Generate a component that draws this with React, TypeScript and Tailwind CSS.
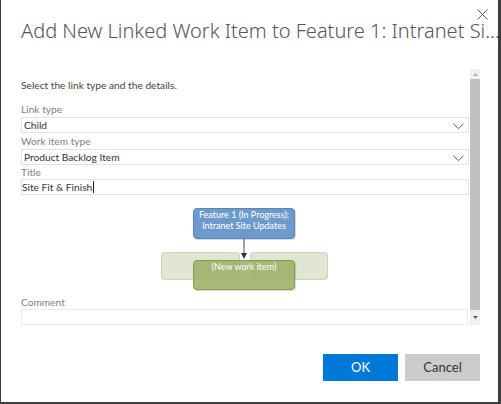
import React from "react";

const Chevron = () => (
  <svg width="11" height="7" viewBox="0 0 11 7" className="absolute right-[4px] top-[5px]">
    <path d="M0.5 0.8 L5.5 5.6 L10.5 0.8" fill="none" stroke="#555" strokeWidth="1" />
  </svg>
);

export default function App() {
  return (
    <div
      className="w-[501px] h-[404px] bg-white border-l border-r-[3px] border-b-[2px] border-[#3c3c3c] relative text-[#333] overflow-hidden"
      style={{ fontFamily: 'Lato, "Open Sans", sans-serif' }}
    >
      {/* close */}
      <svg width="11" height="11" viewBox="0 0 11 11" className="absolute left-[476px] top-[9px]">
        <path d="M0.5 0.5 L10.5 10.5 M10.5 0.5 L0.5 10.5" stroke="#555" strokeWidth="1" />
      </svg>

      {/* header */}
      <div className="pt-[17px] pl-[20px] h-[45px]">
        <div
          className="text-[20px] leading-[28px] font-light text-[#555] whitespace-nowrap"
          style={{ fontFamily: '"Noto Sans", "Open Sans", sans-serif' }}
        >
          Add New Linked Work Item to Feature 1: Intranet Si...
        </div>
      </div>

      {/* scroll region */}
      <div className="mt-[24px] pl-[20px] flex h-[256px]">
        <div className="w-[448px] flex flex-col text-[10.2px]">
          <div className="h-[32px] pt-[8px] leading-[16px] text-[#444]">
            Select the link type and the details.
          </div>
          <div className="h-[16px] leading-[16px] text-[#808080]">Link type</div>
          <div className="relative h-[16px] border border-[#e3e3e3] pl-[2px] leading-[14px] text-[#333]">
            Child
            <Chevron />
          </div>
          <div className="h-[16px] leading-[16px] text-[#808080]">Work item type</div>
          <div className="relative h-[16px] border border-[#e3e3e3] pl-[2px] leading-[14px] text-[#333]">
            Product Backlog Item
            <Chevron />
          </div>
          <div className="h-[14px] leading-[14px] text-[#808080]">Title</div>
          <div className="relative h-[16px] border border-[#e3e3e3] pl-[0px] leading-[14px] text-[#333] flex items-center">
            <span>Site Fit &amp; Finish</span>
            <span className="inline-block w-px h-[12px] bg-[#222] ml-[1px]" />
          </div>

          {/* diagram */}
          <div className="relative h-[101px]">
            <div className="absolute left-[140px] top-[57px] w-[79px] h-[28px] rounded-[3px] bg-[#e1e6d2] border border-[#cdd3ba]" />
            <div className="absolute left-[229px] top-[57px] w-[78px] h-[28px] rounded-[3px] bg-[#e1e6d2] border border-[#cdd3ba]" />
            <div className="absolute left-[172px] top-[13px] w-[102px] h-[31px] rounded-[4px] bg-[#6e9acb] border border-[#5a86b6] text-white text-[9px] leading-[11px] text-center pt-[0px] shadow-[1px_1px_1px_rgba(0,0,0,0.15)] whitespace-nowrap">
              Feature 1 (In Progress):
              <br />
              Intranet Site Updates
            </div>
            <div className="absolute left-[172px] top-[65px] w-[102px] h-[30px] rounded-[4px] bg-[#9fb169]/90 border border-[#879850] text-white text-[9px] leading-[11px] text-center pt-[0px] shadow-[1px_1px_1px_rgba(0,0,0,0.15)]">
              (New work item)
            </div>
            <svg width="10" height="22" viewBox="0 0 10 22" className="absolute left-[218px] top-[44px]">
              <path d="M5 0 L5 16" stroke="#444" strokeWidth="1" />
              <path d="M2 14 L8 14 L5 20 Z" fill="#333" />
            </svg>
          </div>

          <div className="h-[14px] leading-[14px] text-[#808080]">Comment</div>
          <div className="h-[16px] w-[447px] border border-[#ececec]" />
        </div>

        {/* scrollbar */}
        <div className="w-[10px] ml-[1px] bg-[#f0f0f0] flex flex-col items-center">
          <div className="h-[10px] w-full flex items-center justify-center">
            <svg width="5" height="3" viewBox="0 0 5 3">
              <path d="M0 3 L2.5 0 L5 3 Z" fill="#b0b0b0" />
            </svg>
          </div>
          <div className="w-full h-[231px] bg-[#c1c1c1]" />
          <div className="flex-1 w-full flex items-center justify-center">
            <svg width="5" height="3" viewBox="0 0 5 3">
              <path d="M0 0 L2.5 3 L5 0 Z" fill="#606060" />
            </svg>
          </div>
        </div>
      </div>

      {/* footer */}
      <div className="mt-[29px] flex justify-end gap-[7px] pr-[18px]">
        <button className="w-[75px] h-[27px] bg-[#0078d7] text-white text-[13px] leading-[27px]">OK</button>
        <button className="w-[75px] h-[27px] bg-[#cccccc] text-[#333] text-[13px] leading-[27px]">Cancel</button>
      </div>
    </div>
  );
}
